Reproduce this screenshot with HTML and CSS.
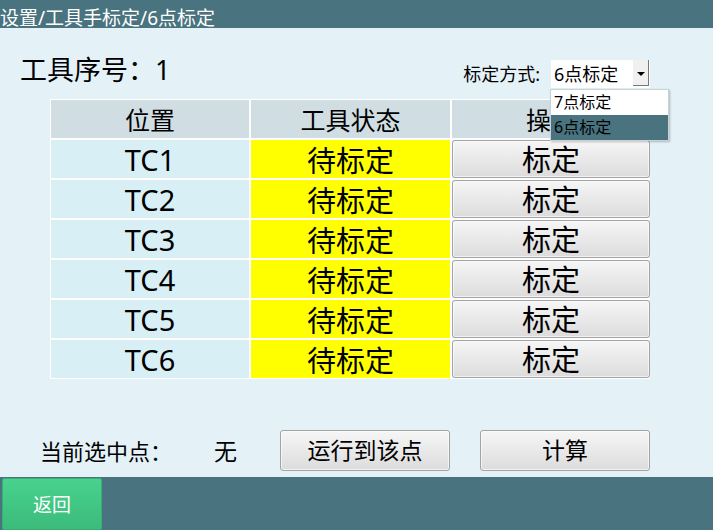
FILE: index.html
```html
<!DOCTYPE html>
<html lang="zh-CN">

<head>
  <meta charset="UTF-8" />
  <meta name="viewport" content="width=device-width, initial-scale=1.0" />
  <title>6点标定</title>
  <link rel="stylesheet" href="styles.css">
</head>

<body>
  <div id="app">
    <div class="title-bar">设置/工具手标定/6点标定</div>

    <div class="main">
      <div class="top-row">
        <div class="tool-no">工具序号：1</div>
        <div class="mode">
          <span class="mode-label">标定方式:</span>
          <div class="select">
            <span class="select-value">6点标定</span>
            <span class="select-arrow"></span>
            <ul class="select-list">
              <li>7点标定</li>
              <li class="active">6点标定</li>
            </ul>
          </div>
        </div>
      </div>

      <div class="grid">
        <div class="cell head">位置</div>
        <div class="cell head">工具状态</div>
        <div class="cell head">操作</div>

        <div class="cell name">TC1</div>
        <div class="cell state">待标定</div>
        <div class="cell op"><button class="btn">标定</button></div>

        <div class="cell name">TC2</div>
        <div class="cell state">待标定</div>
        <div class="cell op"><button class="btn">标定</button></div>

        <div class="cell name">TC3</div>
        <div class="cell state">待标定</div>
        <div class="cell op"><button class="btn">标定</button></div>

        <div class="cell name">TC4</div>
        <div class="cell state">待标定</div>
        <div class="cell op"><button class="btn">标定</button></div>

        <div class="cell name">TC5</div>
        <div class="cell state">待标定</div>
        <div class="cell op"><button class="btn">标定</button></div>

        <div class="cell name">TC6</div>
        <div class="cell state">待标定</div>
        <div class="cell op"><button class="btn">标定</button></div>
      </div>

      <div class="bottom-row">
        <span class="current-label">当前选中点：</span>
        <span class="current-value">无</span>
        <button class="btn wide">运行到该点</button>
        <button class="btn wide">计算</button>
      </div>
    </div>

    <div class="footer">
      <button class="back">返回</button>
    </div>
  </div>
</body>

</html>
```

FILE: styles.css
```css
* {
  box-sizing: border-box;
}

body {
  margin: 0;
  font-family: "Noto Sans", "Noto Sans CJK SC", sans-serif;
  color: #000;
}

#app {
  width: 713px;
  height: 530px;
  display: flex;
  flex-direction: column;
  background-color: #e4f2f8;
}

.title-bar {
  height: 28px;
  padding-top: 8px;
  line-height: 20px;
  font-size: 19px;
  color: #fff;
  background-color: #48737f;
  white-space: nowrap;
}

.main {
  flex: 1;
  display: flex;
  flex-direction: column;
}

.top-row {
  height: 71px;
  display: flex;
  justify-content: space-between;
  padding: 0 63px 0 20px;
}

.tool-no {
  font-size: 27px;
  line-height: 27px;
  margin-top: 28px;
}

.mode {
  display: flex;
  align-items: flex-start;
  margin-top: 32px;
}

.mode-label {
  font-size: 18px;
  line-height: 28px;
  margin-right: 11px;
}

.select {
  position: relative;
  width: 99px;
  height: 28px;
  background-color: #fff;
}

.select-value {
  display: block;
  font-size: 18px;
  line-height: 28px;
  padding-left: 3px;
}

.select-arrow {
  position: absolute;
  right: 1px;
  top: 0;
  width: 16px;
  height: 26px;
  background: #f0f0f0;
  border-right: 1px solid #777;
  border-bottom: 1px solid #777;
}

.select-arrow::after {
  content: "";
  position: absolute;
  left: 4px;
  top: 12px;
  border-left: 4px solid transparent;
  border-right: 4px solid transparent;
  border-top: 4px solid #000;
}

.select-list {
  position: absolute;
  left: -1px;
  top: 29px;
  width: 119px;
  margin: 0;
  padding: 0;
  list-style: none;
  background-color: #fff;
  border: 1px solid #c9d3d6;
  box-shadow: 1px 1px 2px rgba(0, 0, 0, 0.25);
  z-index: 2;
}

.select-list li {
  height: 25px;
  line-height: 25px;
  font-size: 16px;
  padding-left: 3px;
}

.select-list li.active {
  background-color: #48737f;
}

.grid {
  margin-left: 50px;
  width: 600px;
  display: grid;
  grid-template-columns: 198px 199px 198px;
  grid-auto-rows: 38px;
  gap: 2px;
  padding: 1px;
  background-color: #fff;
}

.cell {
  display: flex;
  align-items: center;
  justify-content: center;
  font-size: 29px;
}

.cell.head {
  font-size: 25px;
  background-color: #d0dee3;
}

.cell.name {
  background-color: #d9eff6;
}

.cell.state {
  background-color: #ffff00;
}

.cell.op {
  background-color: #e4f2f8;
  align-items: stretch;
}

.btn {
  width: 100%;
  font-family: inherit;
  font-size: 29px;
  line-height: 1;
  color: #000;
  padding: 0;
  border: 1px solid #a3a3a3;
  border-radius: 3px;
  background: linear-gradient(to bottom, #f6f6f6, #dcdcdc);
  box-shadow: inset 0 0 0 1px rgba(255, 255, 255, 0.6);
}

.bottom-row {
  display: flex;
  align-items: center;
  height: 40px;
  margin-top: 51px;
  padding-left: 40px;
}

.current-label {
  font-size: 22px;
  width: 174px;
}

.current-value {
  font-size: 23px;
  width: 66px;
}

.btn.wide {
  width: 170px;
  height: 41px;
  font-size: 23px;
  margin-right: 30px;
}

.footer {
  height: 53px;
  background-color: #48737f;
  display: flex;
  align-items: flex-end;
  padding-left: 2px;
}

.back {
  width: 100px;
  height: 52px;
  font-family: inherit;
  font-size: 19px;
  color: #fff;
  border: 1px solid #3aae72;
  border-radius: 2px;
  background: linear-gradient(to bottom, #48d28d, #3cbb7b);
}
```
